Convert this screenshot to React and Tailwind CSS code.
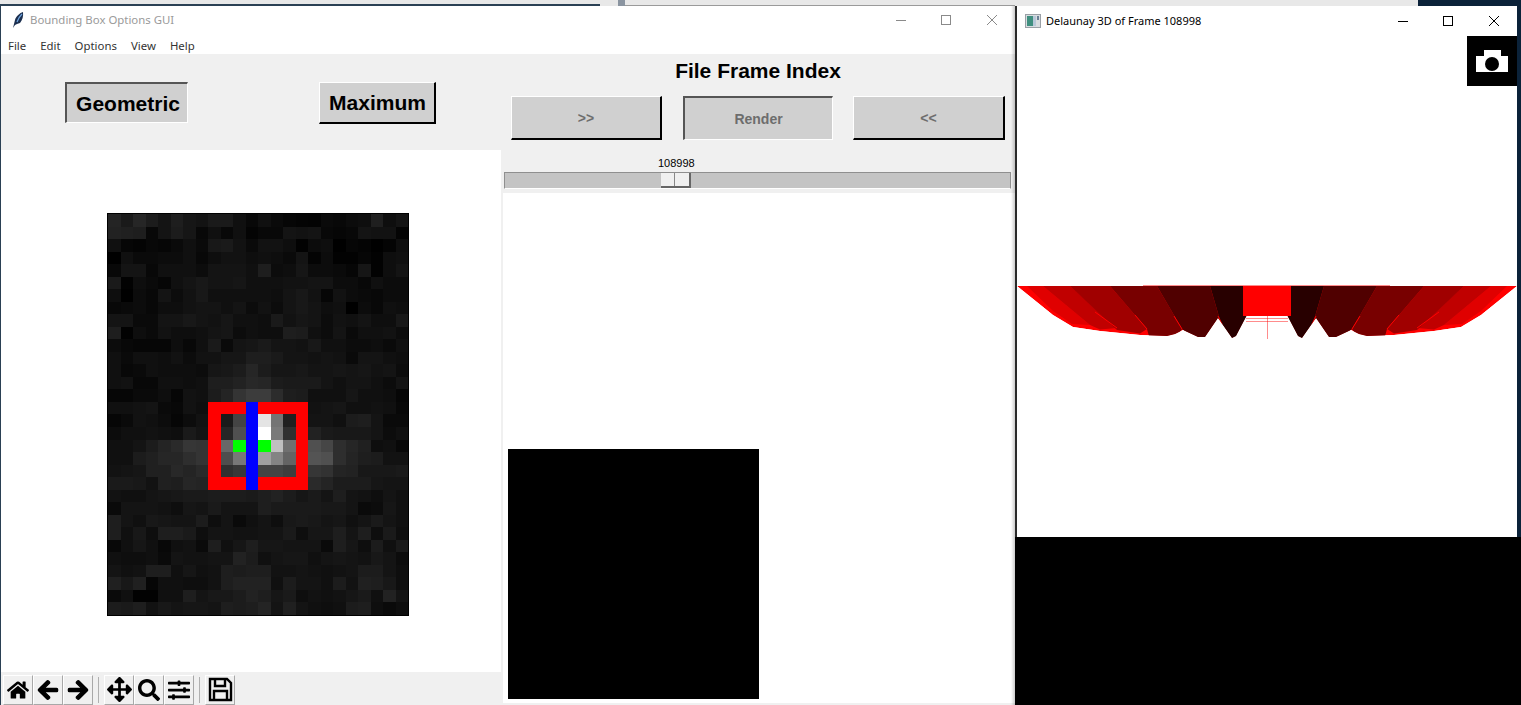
import React from 'react';
import { FaHome, FaArrowLeft, FaArrowRight, FaArrowsAlt, FaSearch, FaSlidersH } from 'react-icons/fa';

const FONT = "font-['Liberation_Sans',Arial,sans-serif]";
const UI_FONT = "font-['Noto_Sans','Open_Sans',sans-serif]";

// grey level per cell, r/b/g are the overlay pixels of the bounding box
const cells = [
  '24 1a 26 1c 14 1e 16 13 1a 1a 10 08 10 0a 06 04 03 0a 08 0c 0e 1f 0e 14',
  '22 20 1e 08 14 1c 16 08 10 08 10 04 08 08 14 12 14 08 06 08 14 12 12 04',
  '10 06 04 08 06 0a 10 0a 18 1a 12 0a 12 12 0e 02 0c 0e 00 06 04 00 04 0e',
  '00 10 0a 0a 0c 0c 10 08 0e 12 12 0e 10 0e 0a 14 04 0c 02 02 06 02 0e 10',
  '08 14 14 08 10 10 10 0c 14 14 14 10 1e 0c 0e 16 0c 0c 0a 06 16 02 0e 14',
  '1a 02 0e 0a 06 10 14 18 14 14 16 10 10 10 12 12 14 14 0c 0c 08 10 0c 0c',
  '0e 00 0c 08 14 0c 12 18 10 10 10 10 10 0e 14 18 12 06 12 0c 0a 08 0c 0c',
  '08 0a 0c 08 0e 0e 12 14 14 10 14 0c 12 0c 14 18 14 0e 10 00 0c 08 10 0e',
  '14 14 0a 0a 14 14 18 14 12 16 10 10 0e 1a 12 16 14 0c 12 10 14 0e 0e 18',
  '1e 02 0e 0a 12 0e 0e 10 14 16 0c 10 0e 0e 1e 1c 10 0c 14 0a 10 10 12 0c',
  '0c 08 06 06 06 0e 08 10 1a 0a 14 16 1a 14 14 12 18 10 10 0c 0c 0e 0a 10',
  '10 0a 10 10 0e 12 0c 12 12 16 16 1e 1e 1a 14 14 12 14 12 0a 14 14 10 0e',
  '10 08 0a 10 0e 0e 0e 0c 16 18 1c 26 1c 16 16 18 14 14 16 14 16 12 14 0c',
  '10 12 08 08 10 10 0e 10 1e 1e 22 28 26 1c 1a 1a 1a 14 10 14 14 10 0c 14',
  '06 06 0a 0a 0e 06 12 10 1c 24 34 3c 3c 2c 1e 1c 10 10 10 16 10 10 0e 06',
  '10 10 12 14 0a 08 12 0e r r r b r r r r 12 14 16 10 10 12 10 08',
  '06 0a 12 10 0c 06 0c 12 r 1a 44 b e4 74 20 r 14 14 10 1c 1e 14 0a 0a',
  '0c 10 10 12 10 0e 1a 14 r 26 50 b ff 7a 30 r 22 1a 18 18 18 14 0c 10',
  '10 10 14 1c 24 2a 36 34 r 68 g b g c0 70 r 50 46 2e 26 20 0e 10 08',
  '10 10 1c 20 26 26 2e 34 r 4e 78 b a0 84 64 r 54 50 2e 24 1e 1c 12 12',
  '12 14 16 20 20 28 24 2a r 30 38 b 44 44 3e r 36 32 24 22 18 18 18 1a',
  '1a 1a 18 12 20 1e 26 24 r r r b r r r r 2a 24 1c 1c 1c 16 14 14',
  '12 10 10 14 16 18 1a 1a 1c 1c 1c 1a 1e 22 1c 16 1a 14 1e 14 12 0e 14 10',
  '0a 14 14 14 12 0e 16 14 1a 14 14 14 1e 1a 1a 1a 1a 18 18 14 0a 0c 16 10',
  '1e 14 10 18 16 14 14 1c 0e 14 0a 10 14 0e 18 1a 18 14 16 10 14 1a 14 10',
  '1e 10 18 0e 1e 1e 1a 0e 14 14 12 12 14 14 1a 0e 16 16 1e 14 1e 0e 1a 0e',
  '08 10 16 10 08 10 12 0a 1e 10 16 1e 16 16 14 14 14 0a 1e 16 0e 1c 10 1a',
  '10 0e 0e 10 0a 14 12 12 14 14 22 1c 10 14 16 16 10 14 16 14 12 18 14 0c',
  '14 10 12 1e 1e 10 16 10 12 1e 1c 1e 1e 12 12 14 12 10 12 14 1c 1c 14 0e',
  '20 18 20 06 10 10 0e 0e 12 1e 22 22 22 10 1c 14 14 10 1c 12 20 1e 18 0e',
  '0a 10 02 02 10 10 1e 14 18 18 1c 22 1e 16 1a 0e 12 10 12 16 1a 10 22 14',
  '1c 1a 1e 12 18 14 16 16 14 1e 1c 1e 24 14 20 14 10 0e 10 1c 1e 0e 0a 0e',
];

const cellColor = (v) => {
  if (v === 'r') return '#ff0000';
  if (v === 'b') return '#0000ff';
  if (v === 'g') return '#00ff00';
  return `#${v}${v}${v}`;
};

const Heatmap = () => (
  <svg width="302" height="403" viewBox="-1 -1 302 403" shapeRendering="crispEdges" className="block bg-black">
    {cells.map((row, y) =>
      row.split(' ').map((v, x) => (
        <rect key={`${x}-${y}`} x={x * 12.5} y={y * 12.53} width="12.5" height="12.53" fill={cellColor(v)} />
      ))
    )}
  </svg>
);

// left half of the fan in page coords, mirrored around x=1267 for the right half
const outline =
  '1017,286 1053,315 1073,327 1100,331 1140,335 1167,336 1175,334 1183,330 1198,337 1205,337 1218,318 1232,338 1236,336 1247,315 1247,286';

const fan = [
  ['#e00000', '1027,286 1043,286 1090,325 1072,324 1053,311'],
  ['#c00000', '1043,286 1070,286 1117,328 1100,329.5 1090,325'],
  ['#a00000', '1070,286 1110,286 1147,329 1140,333.5 1117,330'],
  ['#780000', '1110,286 1157,286 1182,329 1175,340 1150,340 1147,329'],
  ['#500000', '1157,286 1210,286 1220,320 1205,340 1195,340 1182,329'],
  ['#280000', '1210,286 1247,286 1247,318 1236,340 1228,340 1220,320'],
];

const seams = ['1095,312 1117,328', '1135,315 1147,329', '1174,316 1182,329', '1218,316 1222,324'];

const FanHalf = () => (
  <g clipPath="url(#fan-outline)">
    <polygon points={outline} fill="#ff0000" />
    {fan.map(([fill, points]) => (
      <polygon key={fill} points={points} fill={fill} />
    ))}
    {seams.map((points) => (
      <polyline key={points} points={points} stroke="#ff0000" strokeWidth="1" fill="none" />
    ))}
  </g>
);

const Delaunay = () => (
  <svg viewBox="1017 280 501 62" width="501" height="62" className="block">
    <defs>
      <clipPath id="fan-outline">
        <polygon points={outline} />
      </clipPath>
    </defs>
    <FanHalf />
    <g transform="translate(2534 0) scale(-1 1)">
      <FanHalf />
    </g>
    <rect x="1243" y="286" width="48" height="30" fill="#ff0000" />
    <path d="M1143 285.5H1390M1246 318.5H1288M1246 321.5H1288M1267.5 316V339" stroke="#ff0000" strokeOpacity="0.45" strokeWidth="1" fill="none" />
  </svg>
);

const Feather = () => (
  <svg width="12" height="16" viewBox="0 0 12 16" className="block">
    <path d="M1 16L3 8C4 4 8 1 11 0C11.5 4 10.5 8 8 11L5 12L3 13Z" fill="#1c2f4f" />
    <path d="M5 10C6 7 8 4 10 2" stroke="#6fa5e0" strokeWidth="1.2" fill="none" />
  </svg>
);

const WinIcon = () => (
  <svg width="16" height="14" viewBox="0 0 16 14" className="block">
    <rect x="0.5" y="0.5" width="15" height="13" fill="#d8dde0" stroke="#9aa0a6" />
    <rect x="2" y="2" width="6" height="10" fill="#3f8f7f" />
    <rect x="8" y="2" width="3" height="10" fill="#b8c8d8" />
    <rect x="12" y="2" width="2" height="4" fill="#6a7f95" />
  </svg>
);

const WinControls = ({ className }) => (
  <svg width="102" height="12" viewBox="0 0 102 12" className={`block ${className}`} fill="none" stroke="currentColor">
    <path d="M0 6.5H10" />
    <rect x="45.5" y="1.5" width="9" height="9" />
    <path d="M91 1L101 11M101 1L91 11" />
  </svg>
);

const SaveIcon = () => (
  <svg width="25" height="25" viewBox="0 0 25 25" className="block" fill="none" stroke="#000000" strokeWidth="2.4">
    <path d="M2 2H19L23 6V23H2Z" />
    <path d="M7 2V9H17V2" />
    <path d="M6 23V14H19V23" />
  </svg>
);

const raised = 'border-t border-l border-t-white border-l-white border-r-2 border-b-2 border-r-black border-b-black';
const sunken = 'border-t-2 border-l-2 border-t-[#555555] border-l-[#555555] border-r border-b border-r-white border-b-white';

const ToolButton = ({ children }) => (
  <div className="w-[30px] h-[30px] flex items-center justify-center bg-[#f0f0f0] border border-t-white border-l-white border-r-[#a8a8a8] border-b-[#a8a8a8]">
    {children}
  </div>
);

const ToolSep = () => <div className="w-px h-[26px] bg-[#b0b0b0] mx-[5px]" />;

const Toolbar = () => (
  <div className="h-[33px] bg-[#f0f0f0] flex items-center pl-[2px] pt-[2px] text-black">
    <ToolButton><FaHome size={22} /></ToolButton>
    <ToolButton><FaArrowLeft size={22} stroke="currentColor" strokeWidth={30} /></ToolButton>
    <ToolButton><FaArrowRight size={22} stroke="currentColor" strokeWidth={30} /></ToolButton>
    <ToolSep />
    <ToolButton><FaArrowsAlt size={25} /></ToolButton>
    <ToolButton><FaSearch size={22} /></ToolButton>
    <ToolButton><FaSlidersH size={22} /></ToolButton>
    <ToolSep />
    <ToolButton><SaveIcon /></ToolButton>
  </div>
);

const App = () => {
  return (
    <div className={`relative w-[1521px] h-[705px] overflow-hidden bg-[#e8e8e8] ${FONT}`}>
      {/* bits of other windows behind */}
      <div className="absolute left-0 top-[4px] w-[600px] h-[2px] bg-[#2a4054]" />
      <div className="absolute left-[618px] top-0 w-[7px] h-[6px] bg-[#8a94a0]" />
      <div className="absolute left-[625px] top-[5px] w-[390px] h-px bg-[#9a9a9a]" />
      <div className="absolute left-[1418px] top-0 w-[103px] h-[6px] bg-[#0b2239]" />

      {/* main tk window */}
      <div className="absolute left-0 top-[6px] w-[1015px] h-[699px] bg-white border-l border-l-[#2a4054] flex flex-col">
        <div className="h-[31px] pb-[3px] flex items-center justify-between pl-[11px] pr-[17px]">
          <div className="flex items-center gap-[6px]">
            <Feather />
            <span className={`text-[11.4px] text-[#9a9a9a] ${UI_FONT}`}>Bounding Box Options GUI</span>
          </div>
          <WinControls className="text-[#8a8a8a]" />
        </div>
        <div className={`h-[17px] flex items-center gap-[14px] pl-[7px] text-[11.4px] text-[#333333] ${UI_FONT}`}>
          <span>File</span>
          <span>Edit</span>
          <span>Options</span>
          <span>View</span>
          <span>Help</span>
        </div>

        <div className="flex-1 flex bg-[#f0f0f0] min-h-0">
          {/* left column */}
          <div className="w-[500px] flex flex-col">
            <div className="h-[96px] relative">
              <div className={`absolute left-[64px] top-[28px] w-[123px] h-[41px] pt-[2px] pl-[2px] bg-[#d0d0d0] flex items-center justify-center text-[21px] font-bold text-black ${sunken}`}>Geometric</div>
              <div className={`absolute left-[318px] top-[28px] w-[117px] h-[42px] pl-[1px] bg-[#d0d0d0] flex items-center justify-center text-[21px] font-bold text-black ${raised}`}>Maximum</div>
            </div>
            <div className="flex-1 bg-white pt-[63px] pl-[106px]">
              <Heatmap />
            </div>
            <Toolbar />
          </div>

          {/* right column */}
          <div className="flex-1 flex flex-col pl-[2px]">
            <div className="h-[139px] flex flex-col">
              <div className="text-center text-[21px] font-bold text-black leading-[24px] mt-[5px] pr-[2px]">File Frame Index</div>
              <div className="flex mt-[13px] ml-[8px]">
                <div className={`w-[151px] h-[44px] pt-[2px] bg-[#d0d0d0] flex items-center justify-center text-[14px] font-bold text-[#6d6d6d] ${raised}`}>&gt;&gt;</div>
                <div className={`w-[150px] h-[44px] ml-[21px] pt-[2px] bg-[#d0d0d0] flex items-center justify-center text-[14px] font-bold text-[#6d6d6d] ${sunken}`}>Render</div>
                <div className={`w-[152px] h-[44px] ml-[20px] pt-[2px] bg-[#d0d0d0] flex items-center justify-center text-[14px] font-bold text-[#6d6d6d] ${raised}`}>&lt;&lt;</div>
              </div>
              <div className="ml-[1px] w-[507px] relative mt-[16px] h-[16px] text-[11px] text-black leading-[15px]">
                <span className="absolute left-[154px]">108998</span>
              </div>
              <div className="ml-[1px] w-[507px] h-[17px] bg-[#c4c4c4] border border-[#8f8f8f] border-b-white flex pl-[156px]">
                <div className="w-[30px] h-[15px] flex bg-[#f0f0f0] border-b-2 border-r-2 border-b-[#666666] border-r-[#666666]">
                  <div className="w-[14px] border-r border-r-[#888888]" />
                </div>
              </div>
            </div>
            <div className="flex-1 bg-white mb-[2px] flex flex-col justify-end pl-[5px] pb-[4px]">
              <div className="w-[251px] h-[250px] bg-black" />
            </div>
          </div>
        </div>
        <div className="absolute right-0 top-0 bottom-0 w-[4px] bg-linear-to-r from-transparent to-black/20" />
      </div>

      {/* delaunay window */}
      <div className="absolute left-[1015px] top-[6px] w-[506px] h-[699px] flex flex-col bg-black">
        <div className="h-[531px] bg-white border-l-2 border-l-[#2a2a2a] border-r-4 border-r-[#0b2239] flex flex-col">
          <div className="h-[30px] flex items-center justify-between pl-[8px] pr-[17px] shrink-0">
            <div className="flex items-center gap-[5px]">
              <WinIcon />
              <span className={`text-[11px] text-black ${UI_FONT}`}>Delaunay 3D of Frame 108998</span>
            </div>
            <WinControls className="text-black" />
          </div>
          <div className="flex justify-end shrink-0">
            <div className="w-[50px] h-[50px] bg-black flex items-center justify-center">
              <svg width="32" height="22" viewBox="0 0 32 22" className="block">
                <path d="M0 6H8V0H25V6H32V22H0Z" fill="#ffffff" />
                <circle cx="16" cy="14" r="7" fill="#000000" />
              </svg>
            </div>
          </div>
          <div className="mt-[194px]">
            <Delaunay />
          </div>
        </div>
      </div>
    </div>
  );
};

export default App;
